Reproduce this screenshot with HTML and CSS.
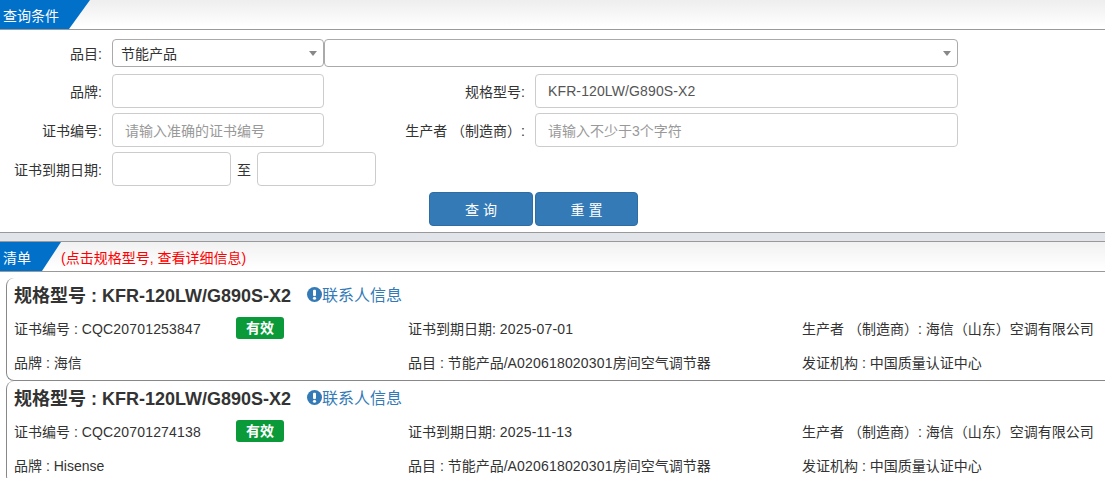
FILE: index.html
```html
<!DOCTYPE html>
<html lang="zh">
<head>
<meta charset="utf-8">
<title>查询</title>
<link rel="stylesheet" href="styles.css">
</head>
<body>
<div class="bar bar-top">
  <div class="tab tab-a">查询条件</div>
</div>
<form class="form">
  <div class="row row-1">
    <label class="lab lab-l">品目:</label>
    <div class="sel sel-a">节能产品<i class="caret"></i></div>
    <div class="sel sel-b"><i class="caret"></i></div>
  </div>
  <div class="row row-2">
    <label class="lab lab-l">品牌:</label>
    <div class="inp inp-a"></div>
    <label class="lab lab-r">规格型号:</label>
    <div class="inp inp-b val"><span class="num">KFR-120LW/G890S-X2</span></div>
  </div>
  <div class="row row-3">
    <label class="lab lab-l">证书编号:</label>
    <div class="inp inp-a ph">请输入准确的证书编号</div>
    <label class="lab lab-r">生产者 （制造商）:</label>
    <div class="inp inp-b ph">请输入不少于3个字符</div>
  </div>
  <div class="row row-4">
    <label class="lab lab-l">证书到期日期:</label>
    <div class="inp inp-c"></div>
    <span class="to">至</span>
    <div class="inp inp-c"></div>
  </div>
  <div class="btns">
    <button type="button" class="btn btn-a">查 询</button>
    <button type="button" class="btn btn-b">重 置</button>
  </div>
</form>
<div class="sep"></div>
<div class="bar bar-list">
  <div class="tab tab-b">清单</div>
  <span class="hint">(点击规格型号, 查看详细信息)</span>
</div>
<div class="list">
  <section class="card">
    <div class="card-title">
      <h3>规格型号 : KFR-120LW/G890S-X2</h3>
      <a class="contact"><svg class="info" viewBox="0 0 16 16" width="15" height="15"><circle cx="8" cy="8" r="8" fill="#337ab7"/><rect x="6.4" y="3" width="3.2" height="6.6" rx="1" fill="#fff"/><circle cx="8" cy="12" r="1.7" fill="#fff"/></svg>联系人信息</a>
    </div>
    <div class="grid">
      <div class="cell"><span>证书编号 : <span class="num">CQC20701253847</span></span><span class="badge">有效</span></div>
      <div class="cell"><span>证书到期日期: <span class="num">2025-07-01</span></span></div>
      <div class="cell">生产者 （制造商）: 海信（山东）空调有限公司</div>
      <div class="cell">品牌 : 海信</div>
      <div class="cell"><span>品目 : 节能产品/<span class="num">A020618020301</span>房间空气调节器</span></div>
      <div class="cell">发证机构 : 中国质量认证中心</div>
    </div>
  </section>
  <section class="card">
    <div class="card-title">
      <h3>规格型号 : KFR-120LW/G890S-X2</h3>
      <a class="contact"><svg class="info" viewBox="0 0 16 16" width="15" height="15"><circle cx="8" cy="8" r="8" fill="#337ab7"/><rect x="6.4" y="3" width="3.2" height="6.6" rx="1" fill="#fff"/><circle cx="8" cy="12" r="1.7" fill="#fff"/></svg>联系人信息</a>
    </div>
    <div class="grid">
      <div class="cell"><span>证书编号 : <span class="num">CQC20701274138</span></span><span class="badge">有效</span></div>
      <div class="cell"><span>证书到期日期: <span class="num">2025-11-13</span></span></div>
      <div class="cell">生产者 （制造商）: 海信（山东）空调有限公司</div>
      <div class="cell">品牌 : Hisense</div>
      <div class="cell"><span>品目 : 节能产品/<span class="num">A020618020301</span>房间空气调节器</span></div>
      <div class="cell">发证机构 : 中国质量认证中心</div>
    </div>
  </section>
</div>
</body>
</html>
```
FILE: styles.css
```css
* { box-sizing: border-box; }
html, body { margin: 0; padding: 0; height: 478px; overflow: hidden; background: #fff; }
body { font-family: "Liberation Sans", "Noto Sans CJK SC", sans-serif; font-size: 14px; color: #333; }

.num { letter-spacing: 0.18px; }
.val .num { letter-spacing: 0.12px; }

.bar { display: flex; align-items: center; border-bottom: 1px solid #999; }
.bar-top { height: 30px; background: linear-gradient(to bottom, #eee, #fff 95%); }
.bar-list { height: 30px; background: linear-gradient(to bottom, #f1f1f1, #fff 95%); }
.tab { height: 100%; color: #fff; background: #0070c9; display: flex; align-items: center; padding-left: 3px; }
.tab-a { width: 90px; clip-path: polygon(0 0, 100% 0, 69px 100%, 0 100%); }
.tab-b { width: 61px; clip-path: polygon(0 0, 100% 0, 42px 100%, 0 100%); }
.hint { color: #f00; }

.form { display: block; height: 202px; padding-top: 9px; }
.row { display: flex; align-items: center; height: 34px; margin-top: 5px; }
.row-1 { height: 28px; margin-top: 0; }
.row-2 { margin-top: 7px; }
.lab { color: #333; text-align: right; flex: none; }
.lab-l { width: 102px; margin-right: 10px; }
.lab-r { width: 181px; margin-left: 20px; margin-right: 10px; }

.sel, .inp { flex: none; height: 100%; background: #fff; border-radius: 4px; display: flex; align-items: center; position: relative; }
.sel { border: 1px solid #aaa; padding-left: 8px; }
.sel-a { width: 212px; }
.sel-b { width: 634px; }
.caret { position: absolute; right: 6px; top: 11px; width: 0; height: 0; border: 4px solid transparent; border-top: 5px solid #888; border-bottom: 0; }
.inp { border: 1px solid #ccc; padding-left: 12px; }
.inp-a { width: 212px; }
.inp-b { width: 423px; }
.inp-c { width: 119px; }
.val { color: #555; }
.ph { color: #999; }
.to { width: 26px; text-align: center; }

.btns { display: flex; justify-content: center; gap: 2px; margin-top: 6px; padding-right: 38px; }
.btn { height: 34px; border: 1px solid #2e6da4; border-radius: 4px; background: #337ab7; color: #fff; font: 14px "Liberation Sans", "Noto Sans CJK SC", sans-serif; }
.btn-a { width: 104px; }
.btn-b { width: 103px; }

.sep { height: 10px; background: #e1e5e9; border-top: 1px solid #999; border-bottom: 1px solid #999; }

.list { padding-left: 6px; padding-top: 6px; }
.card { height: 103px; border-left: 1px solid #888; border-bottom: 1px solid #888; border-radius: 8px 0 0 8px; padding-left: 7px; }
.card-title { display: flex; align-items: center; height: 34px; padding-bottom: 2px; }
.card-title h3 { margin: 0; font-size: 18px; font-weight: bold; color: #333; width: 293px; }
.contact { color: #337ab7; font-size: 16px; display: flex; align-items: center; }
.grid { display: grid; grid-template-columns: 394px 394px 1fr; grid-auto-rows: 34px; }
.cell { display: flex; align-items: center; white-space: nowrap; padding-bottom: 2px; }
.badge { margin-left: 35px; width: 48px; height: 22px; line-height: 22px; background: #0a9a3a; color: #fff; font-weight: bold; text-align: center; border-radius: 3px; }
```
